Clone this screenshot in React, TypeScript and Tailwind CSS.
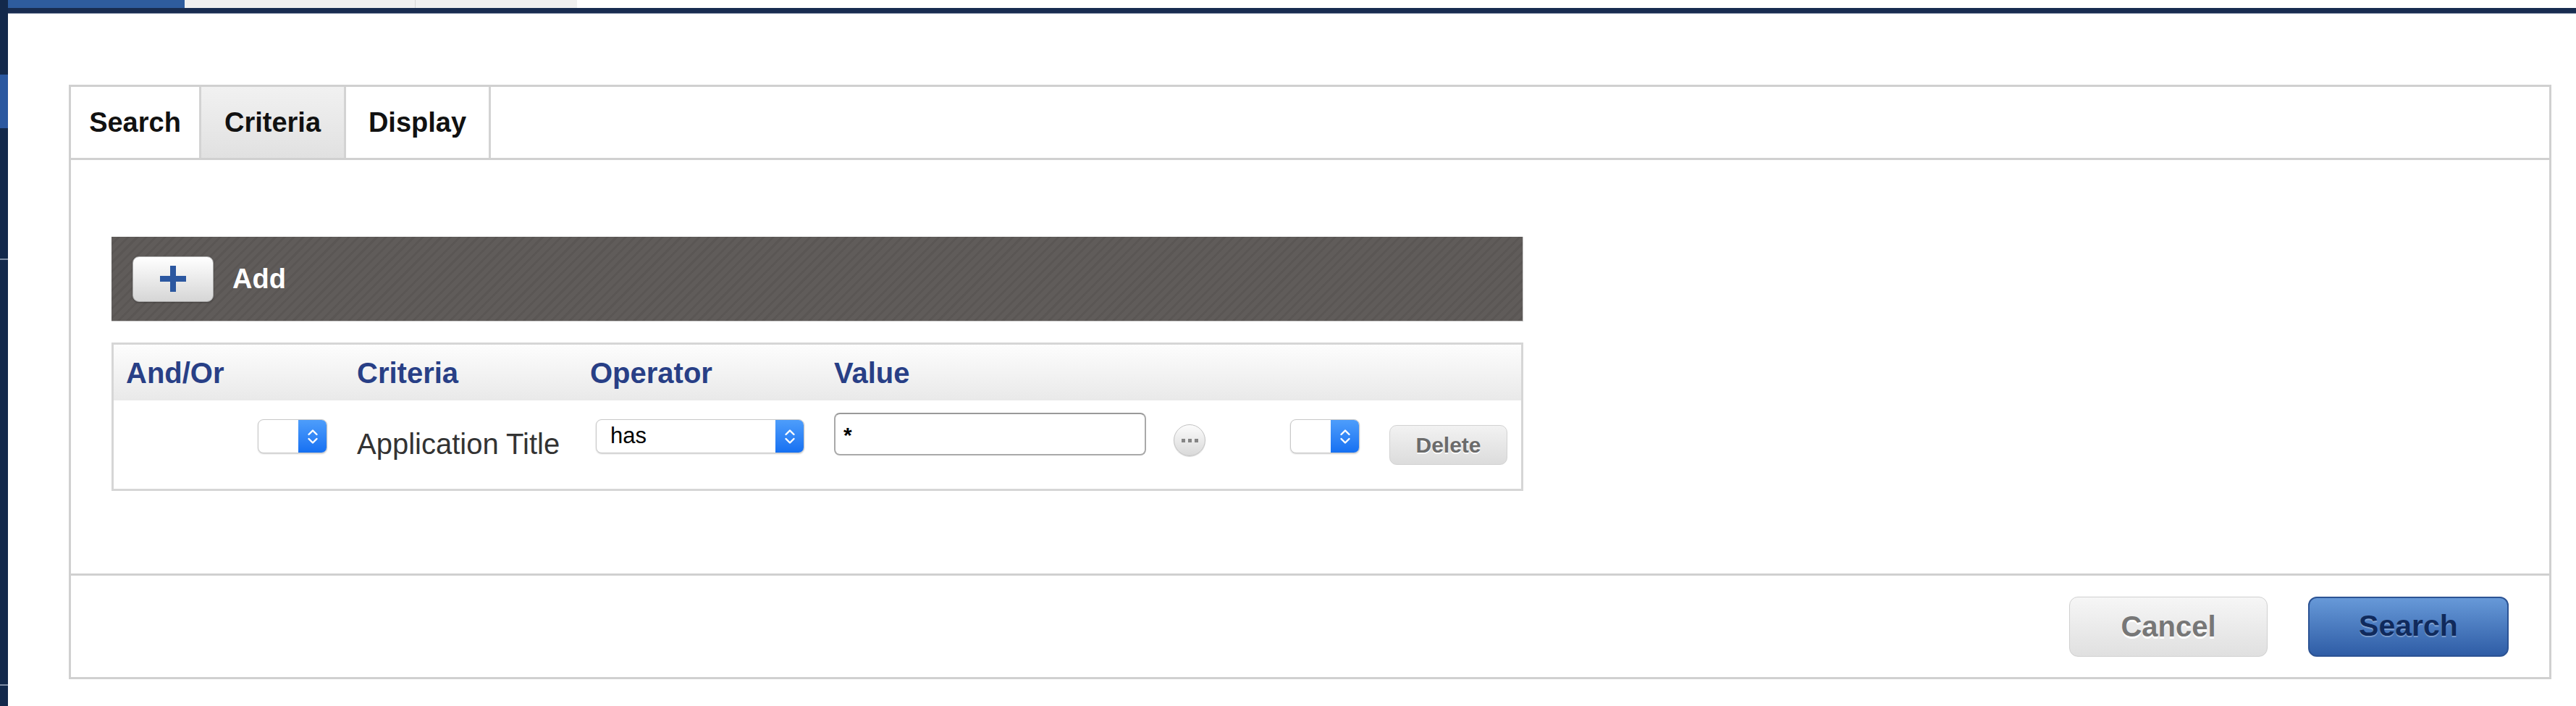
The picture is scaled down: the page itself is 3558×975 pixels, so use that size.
import React from "react";

function Chevrons() {
  return (
    <svg width="16" height="24" viewBox="0 0 16 24" fill="none">
      <path d="M2.5 9 L8 3.5 L13.5 9" stroke="white" strokeWidth="2.4" strokeLinecap="round" strokeLinejoin="round" />
      <path d="M2.5 15 L8 20.5 L13.5 15" stroke="white" strokeWidth="2.4" strokeLinecap="round" strokeLinejoin="round" />
    </svg>
  );
}

function Select({ width, label }: { width: string; label?: string }) {
  return (
    <div className={`${width} h-[47px] flex rounded-[8px] border border-[#c8c8c8] overflow-hidden shadow-[0_1px_2px_rgba(0,0,0,0.18)] bg-white`}>
      <div className="flex-1 flex items-center pl-[19px] text-[31px] text-black">{label}</div>
      <div className="w-[39px] flex items-center justify-center bg-linear-to-b from-[#4d9dfb] to-[#1570f2]">
        <Chevrons />
      </div>
    </div>
  );
}

function LeftStrip() {
  return (
    <div className="w-[11px] h-[975px] flex flex-col bg-[#13294c]">
      <div className="h-[103px]" />
      <div className="h-[74px] bg-[#2b58a0]" />
      <div className="h-[180px]" />
      <div className="h-[2px] bg-[#7d8ca4]" />
      <div className="h-[586px]" />
      <div className="h-[2px] bg-[#7d8ca4]" />
    </div>
  );
}

export default function App() {
  return (
    <div className="flex w-[3558px] h-[975px] bg-white font-['Liberation_Sans',Arial,sans-serif] overflow-hidden">
      <LeftStrip />

      <div className="flex flex-col flex-1">
        {/* top nav */}
        <div className="flex h-[11px]">
          <div className="w-[244px] bg-[#2e5c9e]" />
          <div className="w-[318px] bg-[#f0f0f0]" />
          <div className="w-[1px] bg-[#d6d6d6]" />
          <div className="w-[223px] bg-[#f0f0f0]" />
        </div>
        <div className="h-[8px] bg-[#182c50] border-b border-[#7f8ca3]" />

        <div className="pt-[98px] pl-[84px] pr-[34px]">
          <div className="border-[3px] border-[#d0d0d0] flex flex-col">
            {/* tabs */}
            <div className="flex h-[101px] border-b-[3px] border-[#d0d0d0] text-[38px] font-bold text-[#111]">
              <div className="w-[180px] border-r-[3px] border-[#d3d3d3] flex items-center justify-center">Search</div>
              <div className="w-[200px] border-r-[3px] border-[#d3d3d3] flex items-center justify-center bg-linear-to-b from-[#f1f1f1] to-[#e1e1e1]">Criteria</div>
              <div className="w-[200px] border-r-[3px] border-[#d3d3d3] flex items-center justify-center">Display</div>
            </div>

            {/* body */}
            <div className="h-[571px] px-[56px] pt-[106px]">
              <div className="w-[1950px] h-[117px] flex items-center pl-[29px] border-b border-r border-[#c9c9c9] bg-[repeating-linear-gradient(135deg,#605c5a_0px,#605c5a_6px,#5a5654_6px,#5a5654_9px)]">
                <button className="w-[112px] h-[63px] rounded-[9px] border border-[#a9a9a9] bg-linear-to-b from-white to-[#d6d6d6] flex items-center justify-center shadow-[0_1px_2px_rgba(0,0,0,0.3)]">
                  <svg width="36" height="36" viewBox="0 0 36 36">
                    <rect x="0" y="14" width="36" height="8" fill="#2b57a0" />
                    <rect x="14" y="0" width="8" height="36" fill="#2b57a0" />
                  </svg>
                </button>
                <span className="ml-[26px] text-[38px] font-bold text-white">Add</span>
              </div>

              <div className="w-[1950px] mt-[29px] border-[3px] border-[#d6d6d6]">
                <div className="flex items-center h-[77px] bg-linear-to-b from-[#fdfdfd] to-[#e9e9e9] text-[40px] font-bold text-[#283f86]">
                  <div className="w-[336px] pl-[17px]">And/Or</div>
                  <div className="w-[322px]">Criteria</div>
                  <div className="w-[337px]">Operator</div>
                  <div>Value</div>
                </div>
                <div className="flex items-start h-[122px] bg-white">
                  <div className="w-[336px] pl-[199px] pt-[26px]">
                    <Select width="w-[96px]" />
                  </div>
                  <div className="w-[322px] pt-[38px] text-[40px] leading-[45px] text-[#333]">Application Title</div>
                  <div className="w-[337px] pl-[8px] pt-[26px]">
                    <Select width="w-[288px]" label="has" />
                  </div>
                  <div className="flex items-start">
                    <div className="mt-[17px] w-[431px] h-[59px] rounded-[8px] border-2 border-[#a9a9a9] border-t-[#999] bg-white pl-[11px] pt-[12px] text-[30px] leading-[34px] font-bold text-black">*</div>
                    <div className="mt-[33px] ml-[38px] w-[44px] h-[44px] rounded-full border border-[#c2c2c2] bg-linear-to-b from-[#fcfcfc] to-[#d9d9d9] flex items-center justify-center gap-[4px] shadow-[0_1px_1px_rgba(0,0,0,0.15)]">
                      <div className="w-[5px] h-[5px] bg-[#858585]" />
                      <div className="w-[5px] h-[5px] bg-[#858585]" />
                      <div className="w-[5px] h-[5px] bg-[#858585]" />
                    </div>
                    <div className="mt-[26px] ml-[117px]">
                      <Select width="w-[96px]" />
                    </div>
                    <button className="mt-[34px] ml-[41px] w-[163px] h-[55px] rounded-[10px] border border-[#d2d2d2] bg-linear-to-b from-[#f2f2f2] to-[#dcdcdc] text-[30px] font-bold text-[#6b6b6b] [text-shadow:0_2px_0_#fff]">
                      Delete
                    </button>
                  </div>
                </div>
              </div>
            </div>

            {/* footer */}
            <div className="h-[143px] border-t-[3px] border-[#d0d0d0] flex items-center justify-end gap-[56px] pr-[56px]">
              <button className="w-[274px] h-[83px] rounded-[12px] border border-[#d0d0d0] bg-linear-to-b from-[#f6f6f6] to-[#e0e0e0] text-[40px] font-bold text-[#777] [text-shadow:0_3px_0_#fff]">
                Cancel
              </button>
              <button className="w-[277px] h-[83px] rounded-[12px] border-2 border-[#2c5394] bg-linear-to-b from-[#6799d8] to-[#2f5da6] text-[41px] font-bold text-[#102a5c] [text-shadow:0_2px_0_rgba(255,255,255,0.3)]">
                Search
              </button>
            </div>
          </div>
        </div>
      </div>
    </div>
  );
}
